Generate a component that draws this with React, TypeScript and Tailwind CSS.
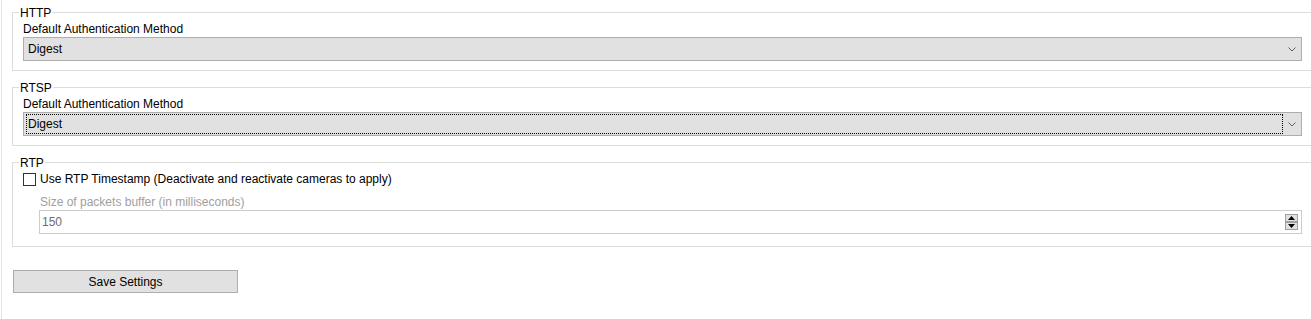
import { ReactNode } from "react";

function GroupBox({ title, children, className = "" }: { title: string; children: ReactNode; className?: string }) {
  return (
    <section className={`border border-r-0 border-[#dcdcdc] pl-[10px] ${className}`}>
      <div className="-ml-[4px] -mt-[7px] w-fit bg-white px-[1px] leading-[15px]">{title}</div>
      {children}
    </section>
  );
}

function Chevron() {
  return (
    <svg width="8" height="5" viewBox="0 0 8 5" className="shrink-0">
      <path d="M0.5 0.5 L4 4 L7.5 0.5" fill="none" stroke="#606060" strokeWidth="1" />
    </svg>
  );
}

function ComboBox({ value, focused = false }: { value: string; focused?: boolean }) {
  return (
    <div className="mr-[9px] flex h-[24px] items-center border border-[#adadad] bg-[#e1e1e1]">
      {focused ? (
        <div className="my-[1px] ml-[2px] flex h-[20px] flex-1 items-center border border-dotted border-black pl-[1px]">
          {value}
        </div>
      ) : (
        <div className="flex-1 pl-[4px]">{value}</div>
      )}
      <div className="flex w-[18px] justify-center">
        <Chevron />
      </div>
    </div>
  );
}

function SpinButton({ up }: { up?: boolean }) {
  return (
    <div className="flex h-[8px] w-[13px] items-center justify-center border border-[#a0a0a0] bg-[#e1e1e1]">
      <svg width="7" height="4" viewBox="0 0 7 4">
        {up ? <path d="M3.5 0 L7 4 L0 4 Z" fill="#000" /> : <path d="M0 0 L7 0 L3.5 4 Z" fill="#000" />}
      </svg>
    </div>
  );
}

export default function App() {
  return (
    <div className="min-h-screen bg-white font-['Liberation_Sans',Arial,sans-serif] text-[12px] leading-[16px] text-black">
      <div className="ml-[1px] min-h-screen border-l border-[#e3e3e3] pl-[10px] pt-[12px]">
        <GroupBox title="HTTP" className="pb-[9px]">
          <div className="leading-[16px]">Default Authentication Method</div>
          <ComboBox value="Digest" />
        </GroupBox>

        <GroupBox title="RTSP" className="mt-[16px] pb-[9px]">
          <div className="leading-[16px]">Default Authentication Method</div>
          <ComboBox value="Digest" focused />
        </GroupBox>

        <GroupBox title="RTP" className="mt-[16px] pb-[12px]">
          <label className="flex h-[16px] items-center">
            <span className="h-[13px] w-[13px] border border-[#333333] bg-white" />
            <span className="ml-[4px]">Use RTP Timestamp (Deactivate and reactivate cameras to apply)</span>
          </label>
          <div className="ml-[17px] mt-[7px] text-[#a0a0a0]">Size of packets buffer (in milliseconds)</div>
          <div className="ml-[16px] mr-[9px] flex h-[24px] items-center border border-[#cccccc] bg-white pl-[2px] pr-[3px]">
            <span className="flex-1 text-[#6d6d6d]">150</span>
            <div className="flex flex-col">
              <SpinButton up />
              <SpinButton />
            </div>
          </div>
        </GroupBox>

        <button
          type="button"
          className="ml-[1px] mt-[23px] flex h-[23px] w-[225px] items-center justify-center border border-[#adadad] bg-[#e1e1e1] text-black"
        >
          Save Settings
        </button>
      </div>
    </div>
  );
}
